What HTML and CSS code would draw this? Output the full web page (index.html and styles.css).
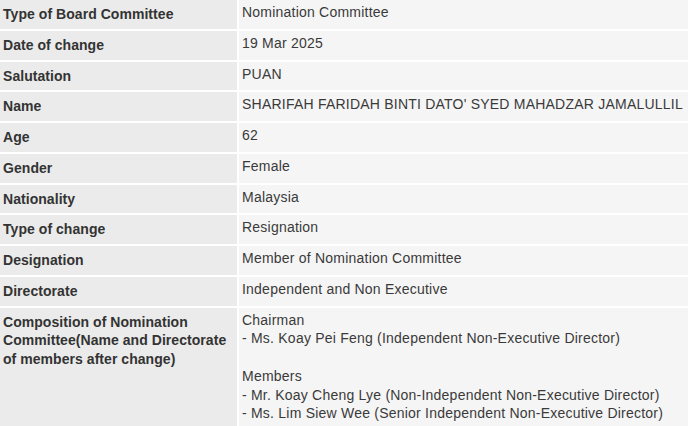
FILE: index.html
```html
<!DOCTYPE html>
<html>
<head>
<meta charset="utf-8">
<link rel="stylesheet" href="styles.css">
</head>
<body>
<table class="info">
  <tbody>
    <tr><th class="label">Type of Board Committee</th><td class="value">Nomination Committee</td></tr>
    <tr><th class="label">Date of change</th><td class="value">19 Mar 2025</td></tr>
    <tr><th class="label">Salutation</th><td class="value">PUAN</td></tr>
    <tr><th class="label">Name</th><td class="value">SHARIFAH FARIDAH BINTI DATO' SYED MAHADZAR JAMALULLIL</td></tr>
    <tr><th class="label">Age</th><td class="value">62</td></tr>
    <tr><th class="label">Gender</th><td class="value">Female</td></tr>
    <tr><th class="label">Nationality</th><td class="value">Malaysia</td></tr>
    <tr><th class="label">Type of change</th><td class="value">Resignation</td></tr>
    <tr><th class="label">Designation</th><td class="value">Member of Nomination Committee</td></tr>
    <tr><th class="label">Directorate</th><td class="value">Independent and Non Executive</td></tr>
    <tr><th class="label">Composition of Nomination Committee(Name and Directorate of members after change)</th><td class="value">Chairman<br>- Ms. Koay Pei Feng (Independent Non-Executive Director)<br><br>Members<br>- Mr. Koay Cheng Lye (Non-Independent Non-Executive Director)<br>- Ms. Lim Siew Wee (Senior Independent Non-Executive Director)</td></tr>
  </tbody>
</table>
</body>
</html>
```
FILE: styles.css
```css
html, body {
  margin: 0;
  padding: 0;
  background: #ffffff;
}
body {
  font-family: "Liberation Sans", Arial, sans-serif;
  font-size: 14px;
  line-height: 18.75px;
  color: #333333;
  overflow: hidden;
}
.info {
  border-collapse: separate;
  border-spacing: 2px;
  margin: -2px;
  width: calc(100% + 4px);
}
.label {
  width: 231px;
  background: #ebebeb;
  color: #333333;
  font-weight: bold;
  text-align: left;
  vertical-align: top;
  letter-spacing: 0.05px;
  padding: 5px 3px 5px 3px;
}
.value {
  background: #f5f5f5;
  color: #3a3a3a;
  vertical-align: top;
  letter-spacing: 0.22px;
  padding: 3px 3px 7px 3px;
}
```
